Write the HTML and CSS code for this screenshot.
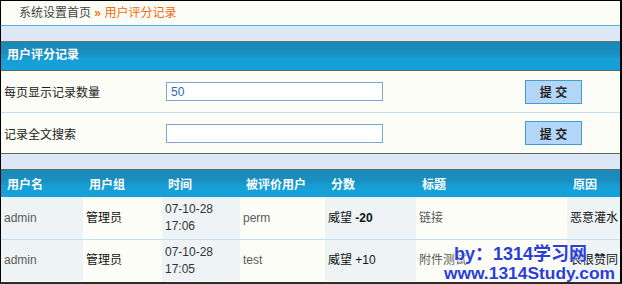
FILE: index.html
```html
<!DOCTYPE html>
<html lang="zh-CN">
<head>
    <meta charset="UTF-8">
    <title>用户评分记录</title>
    <link rel="stylesheet" href="styles.css">
</head>
<body>
    <div class="frame">
        <div class="crumb">系统设置首页 <span class="arrow">»</span> <span class="current">用户评分记录</span></div>
        <div class="band"></div>
        <div class="title-bar">用户评分记录</div>

        <form class="search-form">
            <div class="form-row">
                <label for="perpage">每页显示记录数量</label>
                <input id="perpage" type="text" value="50">
                <button type="button">提 交</button>
            </div>
            <div class="form-row last">
                <label for="keyword">记录全文搜索</label>
                <input id="keyword" type="text">
                <button type="button">提 交</button>
            </div>
        </form>

        <div class="band band-table"></div>

        <table class="records">
            <colgroup>
                <col style="width: 82px">
                <col style="width: 79px">
                <col style="width: 78px">
                <col style="width: 85px">
                <col style="width: 91px">
                <col style="width: 151px">
                <col style="width: 53px">
            </colgroup>
            <tr>
                <th>用户名</th>
                <th>用户组</th>
                <th>时间</th>
                <th>被评价用户</th>
                <th>分数</th>
                <th>标题</th>
                <th>原因</th>
            </tr>
            <tr>
                <td class="alt muted">admin</td>
                <td class="dark">管理员</td>
                <td class="alt time">07-10-28<br>17:06</td>
                <td class="muted">perm</td>
                <td class="alt dark">威望 <b>-20</b></td>
                <td class="muted">链接</td>
                <td class="alt dark">恶意灌水</td>
            </tr>
            <tr class="last">
                <td class="alt muted">admin</td>
                <td class="dark">管理员</td>
                <td class="alt time">07-10-28<br>17:05</td>
                <td class="muted">test</td>
                <td class="alt dark">威望 +10</td>
                <td class="muted">附件测试</td>
                <td class="alt dark">表很赞同</td>
            </tr>
        </table>

        <div class="watermark">
            <div class="wm-by">by：1314学习网</div>
            <div class="wm-url">www.1314Study.com</div>
        </div>
    </div>
</body>
</html>
```

FILE: styles.css
```css
body {
    margin: 0;
    font-family: "Liberation Sans", "Noto Sans CJK SC", sans-serif;
    font-size: 12px;
    color: #333;
}
.frame {
    position: relative;
    box-sizing: border-box;
    width: 622px;
    height: 284px;
    overflow: hidden;
    background-color: #fcfdf6;
    border-top: 1px solid #000;
    border-left: 1px solid #000;
    border-right: 2px solid #000;
    border-bottom: 2px solid #2b2b2b;
}
.crumb {
    height: 24px;
    line-height: 24px;
    padding-left: 18px;
    color: #444;
    border-bottom: 1px solid #45b5dc;
}
.crumb .arrow {
    color: #f07a1a;
    font-weight: bold;
}
.crumb .current {
    color: #f26a10;
}
.band {
    height: 15px;
    background-color: #dce8f5;
}
.title-bar, .records th {
    background: linear-gradient(#1a88b8 0%, #1a8fc0 40%, #169fd6 60%, #15a2da 100%);
    color: #fff;
    font-weight: bold;
}
.title-bar {
    height: 28px;
    line-height: 27px;
    padding-left: 6px;
    border-top: 1px solid #6a7676;
    border-bottom: 1px solid #5b6b5b;
}
.search-form {
    margin: 0;
}
.form-row {
    display: grid;
    grid-template-columns: 162px 359px auto;
    align-items: center;
    height: 41px;
    padding-left: 3px;
    border-bottom: 1px solid #c3dff0;
}
.form-row.last {
    height: 40px;
    border-bottom-color: #5e6a5e;
}
.form-row label {
    color: #222;
}
.form-row input {
    box-sizing: border-box;
    width: 217px;
    height: 19px;
    margin: 0;
    padding: 0 4px;
    border: 1px solid #7ea6d4;
    background-color: #fff;
    font-family: inherit;
    font-size: 12px;
    color: #2f6aa8;
}
.form-row button {
    box-sizing: border-box;
    width: 57px;
    height: 24px;
    margin: 0;
    padding: 0;
    border: 1px solid #3d9fd3;
    background-color: #b4d6f6;
    font-family: inherit;
    font-size: 12px;
    font-weight: bold;
    color: #222;
}
.band-table {
    border-bottom: 1px solid #5d6d5d;
}
.records {
    width: 619px;
    table-layout: fixed;
    border-collapse: collapse;
}
.records th {
    height: 27px;
    padding: 0 0 0 6px;
    text-align: left;
}
.records td {
    height: 42px;
    padding: 0 0 0 3px;
    border-bottom: 1px solid #c3dff0;
    line-height: 17px;
}
.records tr.last td {
    height: 41px;
    border-bottom: none;
}
.records td.alt {
    background-color: #eef3f6;
}
.records .muted {
    color: #5a5a5a;
}
.records .dark {
    color: #111;
}
.records .time {
    color: #333;
}
.watermark {
    position: absolute;
    right: 5px;
    bottom: -1px;
    font-family: "Liberation Sans", "Noto Sans CJK SC", sans-serif;
    font-weight: bold;
    color: #2b3fd6;
    text-shadow: 0 0 2px #fff, 0 0 2px #fff;
    text-align: right;
}
.wm-by {
    font-size: 18px;
    line-height: 20px;
    padding-right: 28px;
}
.wm-url {
    font-size: 17.4px;
    line-height: 19px;
}
```
